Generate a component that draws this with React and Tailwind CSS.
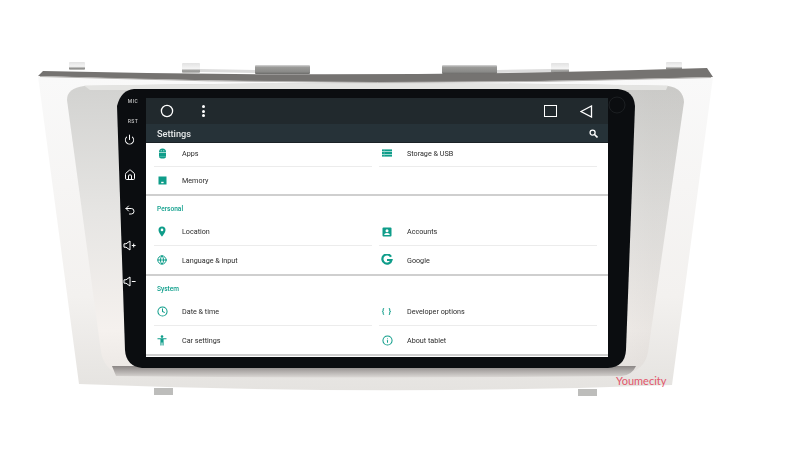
import React from "react";
import { Power, Home, Undo2, Globe, Clock, Info } from "lucide-react";

const font = { fontFamily: "Roboto, sans-serif" };
const T = "#0f9d8a";

function Bezel() {
  return (
    <svg width="790" height="451" viewBox="0 0 790 451" className="absolute left-0 top-0">
      <defs>
        <linearGradient id="outer" x1="0" y1="0" x2="0" y2="1">
          <stop offset="0" stopColor="#f9f9f9" />
          <stop offset="0.7" stopColor="#f3f1ef" />
          <stop offset="1" stopColor="#e5e3e0" />
        </linearGradient>
        <linearGradient id="recess" x1="0" y1="0" x2="0" y2="1">
          <stop offset="0" stopColor="#d2d2d0" />
          <stop offset="0.45" stopColor="#e6e5e3" />
          <stop offset="0.85" stopColor="#f5f1ee" />
          <stop offset="1" stopColor="#ece8e5" />
        </linearGradient>
        <linearGradient id="recessSide" x1="0" y1="0" x2="1" y2="0">
          <stop offset="0.8" stopColor="#8f8c86" stopOpacity="0" />
          <stop offset="0.95" stopColor="#8f8c86" stopOpacity="0.12" />
        </linearGradient>
        <linearGradient id="recessBottom" x1="0" y1="0" x2="0" y2="1">
          <stop offset="0" stopColor="#8b8685" />
          <stop offset="1" stopColor="#dcd9d6" />
        </linearGradient>
        <linearGradient id="clipSmall" x1="0" y1="0" x2="0" y2="1">
          <stop offset="0" stopColor="#e2e2e2" />
          <stop offset="0.55" stopColor="#f4f4f4" />
          <stop offset="0.8" stopColor="#8f8f8d" />
          <stop offset="1" stopColor="#c9c9c7" />
        </linearGradient>
        <linearGradient id="clipWide" x1="0" y1="0" x2="0" y2="1">
          <stop offset="0" stopColor="#d8d8d8" />
          <stop offset="0.25" stopColor="#9a9a98" />
          <stop offset="0.75" stopColor="#8a8a88" />
          <stop offset="1" stopColor="#6c6c6a" />
        </linearGradient>
      </defs>

      {/* top clips */}
      <rect x="69" y="62" width="16" height="8" rx="1" fill="url(#clipSmall)" />
      <rect x="182" y="63" width="18" height="10" rx="1" fill="url(#clipSmall)" />
      <rect x="255" y="65" width="55" height="9" rx="1" fill="url(#clipWide)" />
      <rect x="442" y="65" width="55" height="9" rx="1" fill="url(#clipWide)" />
      <rect x="551" y="63" width="18" height="10" rx="1" fill="url(#clipSmall)" />
      <rect x="666" y="62" width="16" height="8" rx="1" fill="url(#clipSmall)" />
      <path d="M200 69L255 70V73L200 72Z M497 70L551 69V72L497 73Z" fill="#dcdcdc" />

      {/* bottom tabs */}
      <rect x="154" y="388" width="19" height="7" fill="#bdbdbb" />
      <rect x="578" y="389" width="19" height="7" fill="#bdbdbb" />

      {/* outer plate */}
      <path d="M38 76 L79 384 Q380 396 672 385 L713 77 Q380 86 38 76 Z" fill="url(#outer)" />
      <path d="M38 76 L43 71 Q380 79 707 68 L713 77 Q380 88 38 76 Z" fill="#757371" />
      <path d="M40 76.5 Q380 88 711 77.5" fill="none" stroke="#b5b3b1" strokeWidth="1" />

      {/* recess */}
      <path
        d="M67 100 Q67 88 84 86 Q375 80 668 86 Q683 88 684 102 L648 352 Q645 370 625 374 L118 374 Q104 368 101 352 Z"
        fill="url(#recess)"
      />
      <path
        d="M67 100 Q67 88 84 86 Q375 80 668 86 Q683 88 684 102 L648 352 Q645 370 625 374 L118 374 Q104 368 101 352 Z"
        fill="url(#recessSide)"
      />
      <path d="M84 85.5 Q375 81 668 85.5 L666 90 L90 90 Z" fill="#e4e4e2" />
      <path d="M112 366 H636 Q632 375 622 376 Q375 379 116 376 Z" fill="url(#recessBottom)" />

      {/* black body */}
      <path
        d="M117 106 Q121 90 134 89 H618 Q634 91 635 106 L626 350 Q625 367 608 368 H142 Q126 366 125 350 Z"
        fill="#0b0d10"
      />
      <circle cx="617" cy="105" r="8" fill="none" stroke="#1c1f22" strokeWidth="1" />
    </svg>
  );
}

function SideButtons() {
  return (
    <div className="absolute left-[118px] top-[96px] w-[23px] flex flex-col items-center text-[#c4c4c4] will-change-transform" style={font}>
      <div className="h-[10px] leading-[10px] text-[5px] font-medium tracking-[0.4px] ml-[7px]">MIC</div>
      <div className="h-[10px] leading-[10px] text-[5px] font-medium tracking-[0.4px] ml-[7px] mt-[10px]">RST</div>
      <div className="flex flex-col items-center text-white mt-[8px]">
        <Power size={11} strokeWidth={2.2} />
        <div className="mt-[24px] h-[12px]"><Home size={12} strokeWidth={2} /></div>
        <div className="mt-[23px] h-[12px]"><Undo2 size={12} strokeWidth={2} /></div>
        <svg width="13" height="11" viewBox="0 0 13 11" className="mt-[24px]" fill="none" stroke="white" strokeWidth="1">
          <path d="M1 3.8H3L7 1V10L3 7.2H1Z" />
          <path d="M8.8 5.5H12.6M10.7 3.6V7.4" />
        </svg>
        <svg width="13" height="11" viewBox="0 0 13 11" className="mt-[25px]" fill="none" stroke="white" strokeWidth="1">
          <path d="M1 3.8H3L7 1V10L3 7.2H1Z" />
          <path d="M8.8 5.5H12.6" />
        </svg>
      </div>
    </div>
  );
}

const AppsIcon = () => (
  <svg width="9" height="11" viewBox="0 0 9 11" fill={T}>
    <path d="M1 4a3.5 3.5 0 0 1 7 0Z" />
    <rect x="1" y="4.6" width="7" height="4" />
    <path d="M1 8.6h7a3.5 2 0 0 1-7 0Z" />
    <circle cx="3.2" cy="2.8" r=".5" fill="white" />
    <circle cx="5.8" cy="2.8" r=".5" fill="white" />
  </svg>
);
const MemoryIcon = () => (
  <svg width="9" height="9" viewBox="0 0 9 9">
    <rect x="0.5" y="0.5" width="8" height="8" fill={T} />
    <rect x="3.2" y="5.8" width="2.4" height="1.4" fill="white" />
  </svg>
);
const StorageIcon = () => (
  <svg width="10" height="8" viewBox="0 0 10 8" fill={T}>
    <rect x="0" y="0.4" width="10" height="2" />
    <rect x="0" y="3" width="10" height="2" />
    <rect x="0" y="5.6" width="10" height="2" />
    <path d="M2.2 0V8" stroke="#7fd0c4" strokeWidth=".5" />
  </svg>
);
const AccountIcon = () => (
  <svg width="10" height="10" viewBox="0 0 10 10">
    <rect x="0.5" y="0.5" width="9" height="9" rx="1" fill={T} />
    <circle cx="5" cy="3.8" r="1.5" fill="white" />
    <path d="M2.2 8a2.8 2 0 0 1 5.6 0Z" fill="white" />
  </svg>
);
const GoogleIcon = () => (
  <svg width="12" height="12" viewBox="0 0 12 12" fill="none" stroke={T} strokeWidth="2.2">
    <path d="M10 2.8A4.6 4.6 0 1 0 10.5 6H6" />
  </svg>
);
const PersonIcon = () => (
  <svg width="10" height="11" viewBox="0 0 10 11" fill={T}>
    <circle cx="5" cy="1.6" r="1.3" />
    <path d="M0.5 3.2H9.5V4.2H6.6V10.5H5.5V7.6H4.5V10.5H3.4V4.2H0.5Z" />
  </svg>
);
const PinIcon = () => (
  <svg width="10" height="11" viewBox="0 0 10 11">
    <path d="M5 0.4A3.5 3.5 0 0 0 1.5 3.9C1.5 6.5 5 10.6 5 10.6S8.5 6.5 8.5 3.9A3.5 3.5 0 0 0 5 0.4Z" fill={T} />
    <circle cx="5" cy="3.9" r="1.3" fill="white" />
  </svg>
);
const BraceIcon = () => (
  <span className="text-[8px] leading-none font-bold text-[#0f9d8a] tracking-[1px]">{"{ }"}</span>
);

function Cell({ icon, label, line, className = "h-[28px] pt-[2px]" }) {
  return (
    <div className={"flex-1 min-w-0 flex items-center " + className + (line ? " border-b border-[#ececec]" : "")}>
      <div className="w-[16px] flex justify-center items-center -translate-y-[1px]">{icon}</div>
      <div className="ml-[12px] text-[7.2px] text-[#2b2b2b]">{label}</div>
    </div>
  );
}

function ListSection({ title, rows }) {
  return (
    <div className="bg-white border-b-[2px] border-[#cfcfcf] shrink-0">
      <div className="h-[22px] pt-[8px] pl-[11px] text-[6.6px] leading-[10px] font-medium text-[#12a08d]">{title}</div>
      {rows.map((r, i) => (
        <div key={i} className="flex gap-[7px] pl-[8px] pr-[11px]">
          <Cell icon={r[0]} label={r[1]} line={i === 0} />
          <Cell icon={r[2]} label={r[3]} line={i === 0} />
        </div>
      ))}
    </div>
  );
}

function Screen() {
  return (
    <div className="absolute left-[146px] top-[98px] w-[462px] h-[259px] flex flex-col overflow-hidden will-change-transform" style={font}>
      <div className="h-[26px] bg-[#21292d] flex items-center text-white shrink-0">
        <svg width="14" height="14" viewBox="0 0 14 14" className="ml-[14px]" fill="none" stroke="white" strokeWidth="1.3">
          <circle cx="7" cy="7" r="5.6" />
        </svg>
        <div className="ml-[28px] flex flex-col gap-[1.6px]">
          <div className="w-[3px] h-[3px] rounded-full bg-white" />
          <div className="w-[3px] h-[3px] rounded-full bg-white" />
          <div className="w-[3px] h-[3px] rounded-full bg-white" />
        </div>
        <div className="ml-auto w-[13px] h-[12px] border-[1.3px] border-white" />
        <svg width="13" height="13" viewBox="0 0 13 13" className="ml-[23px] mr-[15px]" fill="none" stroke="white" strokeWidth="1.3">
          <path d="M1 6.5L11.5 1V12Z" />
        </svg>
      </div>
      <div className="h-[19px] bg-[#263238] border-b border-[#1b2226] flex items-center justify-between pl-[11px] pr-[10px] shrink-0">
        <div className="text-[9.2px] font-medium text-[#e6e9ea] translate-y-[0.5px]">Settings</div>
        <svg width="9" height="9" viewBox="0 0 9 9" fill="none" stroke="white">
          <circle cx="3.6" cy="3.6" r="2.5" strokeWidth="1.3" />
          <path d="M5.5 5.5L8.5 8.5" strokeWidth="1.6" />
        </svg>
      </div>

      <div className="flex flex-col flex-1 bg-white">
        <div className="bg-white border-b-[2px] border-[#cfcfcf] shrink-0">
          <div className="flex gap-[7px] pl-[8px] pr-[11px]">
            <Cell className="h-[24px] pb-[1px]" icon={<AppsIcon />} label="Apps" line />
            <Cell className="h-[24px] pb-[1px]" icon={<StorageIcon />} label="Storage & USB" line />
          </div>
          <div className="flex gap-[7px] pl-[8px] pr-[11px]">
            <Cell className="h-[27px] pt-[2px]" icon={<MemoryIcon />} label="Memory" />
            <div className="flex-1" />
          </div>
        </div>

        <ListSection
          title="Personal"
          rows={[
            [<PinIcon />, "Location", <AccountIcon />, "Accounts"],
            [<Globe size={10} strokeWidth={2.4} color={T} />, "Language & input", <GoogleIcon />, "Google"],
          ]}
        />
        <ListSection
          title="System"
          rows={[
            [<Clock size={11} strokeWidth={2.2} color={T} />, "Date & time", <BraceIcon />, "Developer options"],
            [<PersonIcon />, "Car settings", <Info size={11} strokeWidth={2.2} color={T} />, "About tablet"],
          ]}
        />
      </div>
    </div>
  );
}

export default function App() {
  return (
    <div className="relative w-[790px] h-[451px] bg-white overflow-hidden">
      <Bezel />
      <SideButtons />
      <Screen />
      <div
        className="absolute left-[616px] top-[374px] text-[11px] leading-[14px] text-[#e2566b]"
        style={{ fontFamily: "Lato, sans-serif" }}
      >
        Youmecity
      </div>
    </div>
  );
}
